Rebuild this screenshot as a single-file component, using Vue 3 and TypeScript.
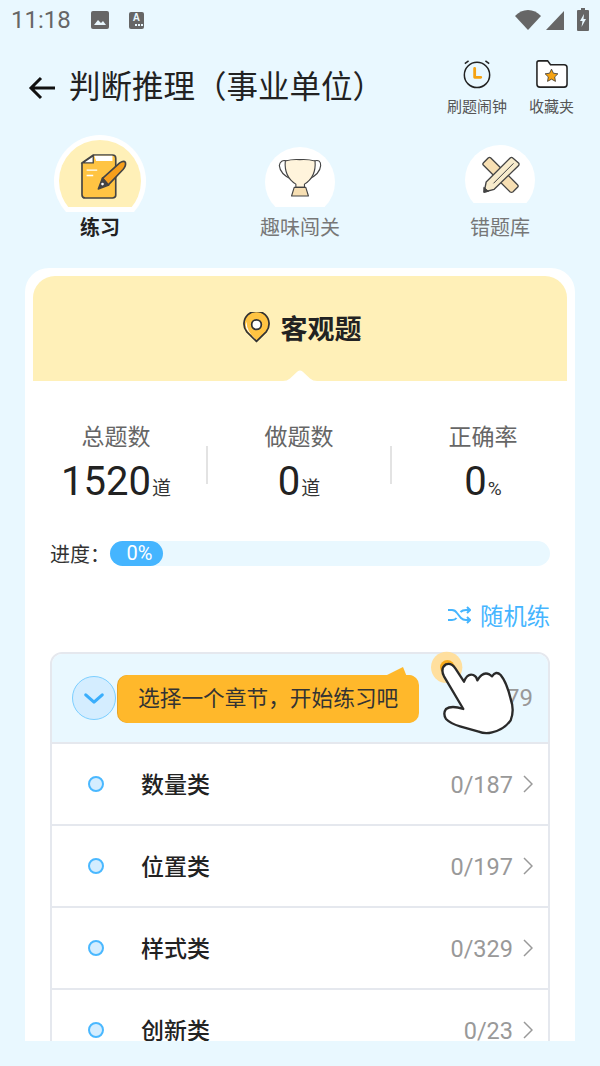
<script setup lang="ts">
interface Row { name: string; count: string }
const rows: Row[] = [
  { name: '数量类', count: '0/187' },
  { name: '位置类', count: '0/197' },
  { name: '样式类', count: '0/329' },
  { name: '创新类', count: '0/23' },
]
const stats = [
  { label: '总题数', value: '1520', unit: '道' },
  { label: '做题数', value: '0', unit: '道' },
  { label: '正确率', value: '0', unit: '%' },
]
</script>

<template>
  <div class="page">
    <div class="status">
      <span class="time">11:18</span>
      <svg class="st-img" viewBox="0 0 18 18"><path fill="#666" d="M2 0h14a2 2 0 0 1 2 2v14a2 2 0 0 1-2 2H2a2 2 0 0 1-2-2V2a2 2 0 0 1 2-2z"/><path fill="#e9f8ff" d="M3 14l4-5 3 3 2-2 3 4z"/></svg>
      <span class="st-a"><b>A</b><svg viewBox="0 0 15 3" width="15" height="3"><path fill="#e9f8ff" d="M6 0h2v2H6zM9 0h2v2H9zM12 0h2v2h-2z"/></svg></span>
      <span class="grow"></span>
      <svg class="st-wifi" viewBox="0 0 26 20"><path fill="#666" d="M13 20L0 6Q5.500 0 13 0t13 6z"/></svg>
      <svg class="st-sig" viewBox="0 0 18 19"><path fill="#666" d="M18 0v19H0z"/></svg>
      <svg class="st-bat" viewBox="0 0 12 23"><path fill="#666" d="M4 0h4v2h3a1 1 0 0 1 1 1v19a1 1 0 0 1-1 1H1a1 1 0 0 1-1-1V3a1 1 0 0 1 1-1h3z"/><path fill="#e9f8ff" d="M7 6L3 13h2.500L4.500 19 9 11H6.500z"/></svg>
    </div>

    <header class="topbar">
      <svg class="back" viewBox="0 0 28 24"><path d="M27 12H3M13 2L3 12l10 10" fill="none" stroke="#111" stroke-width="3"/></svg>
      <h1 class="title">判断推理（事业单位）</h1>
      <span class="grow"></span>
      <div class="tool alarm">
        <svg viewBox="0 0 32 32" width="30" height="30">
          <circle cx="16" cy="17" r="13.500" fill="none" stroke="#222" stroke-width="1.600"/>
          <path d="M3 5l4-3M29 5l-4-3" stroke="#222" stroke-width="1.600" fill="none"/>
          <path d="M13.500 10v9.500H20" fill="none" stroke="#f5a211" stroke-width="3" stroke-linejoin="round" stroke-linecap="round"/>
        </svg>
        <span>刷题闹钟</span>
      </div>
      <div class="tool folder">
        <svg viewBox="0 0 34 30" width="33" height="30">
          <path d="M2 3.500Q2 1.500 4 1.500h9l3 4h14q3 0 3 3v17q0 3-3 3H5q-3 0-3-3z" fill="#fff" stroke="#222" stroke-width="1.600"/>
          <path d="M17 10l2 4.200 4.600.6-3.300 3.200.8 4.600-4.100-2.300-4.100 2.300.8-4.600-3.300-3.200 4.600-.6z" fill="#f5a211" stroke="#333" stroke-width=".8"/>
        </svg>
        <span>收藏夹</span>
      </div>
    </header>

    <nav class="tabs">
      <div class="tab active">
        <div class="bubble b1">
          <div class="yellow"></div>
          <svg class="ic" viewBox="150 68 145 142" width="48" height="47">
            <path d="M190 74H248Q258 74 258 84V196Q258 204 248 204H166Q156 204 156 194V98Z" fill="#ffc443" stroke="#444" stroke-width="5"/>
            <path d="M190 76V98H158Z" fill="#fff" stroke="#444" stroke-width="4"/>
            <path d="M196 78H246V90H200ZM170 120H202M170 136H190" fill="#fff" stroke="#fff" stroke-width="4"/>
            <path d="M218 145L270 98Q282 90 287 96Q290 106 280 118L235 165Z" fill="#f79f1c" stroke="#444" stroke-width="5" stroke-linejoin="round"/>
            <path d="M218 143L237 165L205 177Z" fill="#444" stroke="#444" stroke-width="4" stroke-linejoin="round"/>
            <circle cx="218" cy="162" r="4" fill="#fff"/>
          </svg>
        </div>
        <span class="label">练习</span>
      </div>
      <div class="tab">
        <div class="bubble b2">
          <svg class="ic" viewBox="110 80 145 130" width="48" height="43">
            <path d="M145 92Q122 86 120 106Q122 132 158 148M225 92Q246 86 245 106Q243 132 207 148" fill="none" stroke="#444" stroke-width="3.400"/>
            <path d="M138 92Q160 86 182 88Q205 86 228 92Q232 140 196 162V172H170V162Q134 140 138 92Z" fill="#fff4dc" stroke="#444" stroke-width="3.400" stroke-linejoin="round"/>
            <path d="M165 172H200L208 198H157Z" fill="#f7dfb3" stroke="#444" stroke-width="3.400" stroke-linejoin="round"/>
          </svg>
        </div>
        <span class="label">趣味闯关</span>
      </div>
      <div class="tab">
        <div class="bubble b3">
          <svg class="ic" viewBox="720 75 125 120" width="42" height="40">
            <path d="M752 84L832 164Q836 168 832 172L818 186Q814 188 810 186L730 106Q726 102 730 98L744 84Q748 80 752 84Z" fill="#f7dfb3" stroke="#444" stroke-width="4"/>
            <path d="M818 84L836 100Q838 104 834 108L762 178L732 186L738 156L810 84Q814 80 818 84Z" fill="#f7ebcc" stroke="#444" stroke-width="4" stroke-linejoin="round"/>
            <path d="M731 172L745 184L731 187Z" fill="#444" stroke="#444" stroke-width="3"/>
            <path d="M760 160L820 100" stroke="#444" stroke-width="3"/>
          </svg>
        </div>
        <span class="label">错题库</span>
      </div>
    </nav>

    <main class="card">
      <section class="banner">
        <svg viewBox="0 0 28 32" width="27" height="31">
          <path d="M14 30.500L4 20.500A13 13 0 1 1 24 20.500Z" fill="#ffc443" stroke="#333" stroke-width="1.800" stroke-linejoin="round"/>
          <path d="M14 29L6 21A11 11 0 0 1 3.500 10Q4 21 14 29Z" fill="#fff"/>
          <circle cx="14" cy="13" r="5" fill="#fff" stroke="#333" stroke-width="1.800"/>
        </svg>
        <span>客观题</span>
        <svg class="notch" viewBox="0 0 34 11" width="34" height="11"><path fill="#fff" d="M0 11Q4 11 7 8.500L14.500 1.500Q17 -.5 19.500 1.500L27 8.500Q30 11 34 11Z"/></svg>
      </section>

      <section class="stats">
        <div v-for="s in stats" :key="s.label" class="stat">
          <span class="stat-label">{{ s.label }}</span>
          <span class="stat-value">{{ s.value }}<small>{{ s.unit }}</small></span>
        </div>
      </section>

      <section class="progress">
        <span class="p-label">进度：</span>
        <div class="track"><div class="fill" :style="{ width: '53px' }">0%</div></div>
      </section>

      <div class="random">
        <svg viewBox="0 0 24 20" width="24" height="20">
          <path d="M1 5H5Q8 5 10 8L14 13Q16 15 19 15H23M20 12l3 3-3 3M1 15H5Q8 15 9.500 13M13.500 7Q15.500 5 19 5H23M20 2l3 3-3 3" fill="none" stroke="#45b5ff" stroke-width="2"/>
        </svg>
        <span>随机练</span>
      </div>

      <section class="list">
        <div class="head">
          <div class="toggle">
            <svg viewBox="0 0 24 14" width="22" height="13"><path d="M3 3l9 8 9-8" fill="none" stroke="#3aaefc" stroke-width="3.400" stroke-linecap="round" stroke-linejoin="round"/></svg>
          </div>
          <span class="grow"></span>
          <span class="head-count">0/779</span>
          <div class="tip">
            <svg class="tip-ear" viewBox="0 0 24 10" width="24" height="10"><path fill="#ffb82b" d="M0 10L20 0L24 10Z"/></svg>
            选择一个章节，开始练习吧
          </div>
          <svg class="hand" viewBox="0 0 540 330" width="180" height="110">
            <circle cx="200" cy="85" r="47" fill="#ffdf9e"/>
            <circle cx="202" cy="85" r="22" fill="#f8ab1c"/>
            <path d="M250 210L192 112Q180 88 198 76Q214 70 226 88L252 128Q262 102 280 108Q290 112 292 124Q308 96 328 106L336 112Q348 94 362 108Q380 130 392 180Q404 214 392 244Q372 272 336 280Q316 286 296 278L240 262Q212 254 198 240Q188 224 198 210Q214 198 250 210Z" fill="#fff" stroke="#2a2a2a" stroke-width="7" stroke-linejoin="round"/>
          </svg>
        </div>
        <div v-for="r in rows" :key="r.name" class="row">
          <i class="dot"></i>
          <span class="name">{{ r.name }}</span>
          <span class="grow"></span>
          <span class="count">{{ r.count }}</span>
          <svg class="chev" viewBox="0 0 10 18" width="10" height="18"><path d="M1 1l8 8-8 8" fill="none" stroke="#999" stroke-width="1.500"/></svg>
        </div>
      </section>
    </main>
  </div>
</template>

<style>
html, body { margin: 0; background: #e9f8ff; }
</style>

<style scoped>
.page {
  width: 600px; height: 1066px; overflow: hidden; background: #e9f8ff;
  font-family: Roboto, "Noto Sans CJK SC", sans-serif; color: #222;
  display: flex; flex-direction: column;
}
.grow { flex: 1; }
.status { height: 40px; display: flex; align-items: center; padding: 0 11px; box-sizing: border-box; }
.time { font-size: 24px; color: #666; line-height: 42px; }
.st-img { width: 18px; height: 18px; margin-left: 20px; }
.st-a {
  width: 15px; height: 17px; margin-left: 20px; background: #666; border-radius: 2px; color: #e9f8ff;
  display: flex; flex-direction: column; align-items: center; font-size: 10px; line-height: 12px;
}
.st-a b { font-family: "Liberation Sans", sans-serif; }
.st-a svg { display: block; }
.st-wifi { width: 26px; height: 20px; }
.st-sig { width: 18px; height: 19px; margin-left: 5px; margin-top: 1px; }
.st-bat { width: 12px; height: 23px; margin-left: 13px; margin-top: -2px; }

.topbar { height: 90px; display: flex; align-items: center; padding: 0 26px 0 28px; box-sizing: border-box; }
.back { width: 28px; height: 24px; margin-top: 5px; }
.title { margin: 5px 0 0 13px; font-size: 31.500px; font-weight: 400; color: #222; line-height: 40px; white-space: nowrap; }
.tool { display: flex; flex-direction: column; align-items: center; font-size: 15px; color: #555; white-space: nowrap; height: 58px; margin-top: 5px; }
.tool span { line-height: 20px; margin-top: auto; }
.alarm { margin-right: 22px; }
.tool svg { display: block; flex: none; }

.tabs { display: grid; grid-template-columns: repeat(3, 200px); height: 120px; margin-bottom: 18px; }
.tab { display: flex; flex-direction: column; align-items: center; height: 111px; }
.bubble { position: relative; overflow: hidden; flex: none; }
.bubble::before { content: ""; position: absolute; left: 0; top: 0; border-radius: 50%; background: #fff; }
.b1 { width: 92px; height: 77px; margin-top: 5px; }
.b1::before { width: 92px; height: 92px; }
.yellow { position: absolute; left: 5px; top: 5px; width: 82px; height: 82px; border-radius: 50%; background: #fff0b8; clip-path: inset(0 0 15px 0); }
.b2 { width: 70px; height: 60px; margin-top: 17px; }
.b3 { width: 70px; height: 58px; margin-top: 15px; }
.b2::before, .b3::before { width: 70px; height: 70px; }
.ic { position: absolute; }
.b1 .ic { left: 26px; top: 18px; }
.b2 .ic { left: 11px; top: 10px; }
.b3 .ic { left: 15px; top: 10px; }
.label { margin-top: auto; font-size: 20px; line-height: 26px; color: #777; }
.active .label { color: #222; font-weight: 700; }

.card {
  width: 550px; height: 773px; margin-left: 25px; background: #fff; border-radius: 24px 24px 0 0;
  overflow: hidden; flex: none; padding-top: 8px; box-sizing: border-box;
}
.banner {
  position: relative; margin: 0 8px; height: 105px; padding: 0 0 2px 4px; box-sizing: border-box; background: #fff0b8; border-radius: 22px 22px 0 0;
  display: flex; align-items: center; justify-content: center; gap: 11px;
  font-size: 27px; font-weight: 700; color: #222;
}
.notch { position: absolute; left: 250px; bottom: 0; }
.stats { display: grid; grid-template-columns: 182px 184px 184px; margin-top: 42px; }
.stat { display: flex; flex-direction: column; align-items: center; position: relative; }
.stat:not(:last-child)::after { content: ""; position: absolute; right: -1px; top: 23px; height: 38px; width: 2px; background: #e3e3e3; }
.stat-label { font-size: 23px; line-height: 30px; color: #666; }
.stat-value { font-size: 40px; line-height: 58px; color: #222; }
.stat-value small { font-size: 19px; color: #333; margin-left: 1px; }
.progress { display: flex; align-items: center; margin: 22px 25px 0; height: 26px; }
.p-label { font-size: 20px; color: #333; width: 60px; flex: none; white-space: nowrap; }
.track { flex: 1; height: 25px; border-radius: 13px; background: #e9f8ff; }
.fill { height: 25px; box-sizing: border-box; padding-left: 6px; border-radius: 13px; background: #45b5ff; color: #fff; font-size: 20px; line-height: 25px; text-align: center; }
.random { display: flex; align-items: center; justify-content: flex-end; gap: 9px; margin: 33px 25px 0; height: 32px; color: #45b5ff; font-size: 23.300px; }
.list { margin: 21px 25px 0; border: 2px solid #e5e8ee; border-radius: 12px 12px 0 0; box-sizing: border-box; }
.head {
  position: relative; height: 88px; background: #e9f8ff; border-radius: 10px 10px 0 0; border-bottom: 2px solid #e5e8ee;
  box-sizing: content-box; display: flex; align-items: center; padding: 0 15px 0 20px;
}
.toggle {
  width: 44px; height: 44px; box-sizing: border-box; border: 1.500px solid #7ccfff; border-radius: 50%; background: #d4edff;
  display: flex; align-items: center; justify-content: center;
}
.head-count { font-size: 24px; color: #999; }
.tip {
  position: absolute; left: 66px; top: 21px; width: 301px; height: 48px; box-sizing: border-box; padding-left: 20px;
  background: #ffb82b; border-radius: 10px; box-shadow: -1px 0 0 #e8a325; color: #333; font-size: 21.700px; line-height: 48px; white-space: nowrap;
}
.tip-ear { position: absolute; right: 12px; top: -8px; }
.hand { position: absolute; left: 328px; top: -15px; }
.row { height: 80px; display: flex; align-items: center; border-bottom: 2px solid #e5e8ee; padding: 0 15px 0 36px; }
.dot { width: 16px; height: 16px; box-sizing: border-box; border: 2px solid #4ab8ff; border-radius: 50%; background: #d4edff; flex: none; }
.name { margin-left: 37px; font-size: 23px; font-weight: 500; color: #222; line-height: 30px; margin-top: 4px; }
.count { font-size: 23.500px; color: #999; margin-top: 2px; }
.chev { margin-left: 10px; }
</style>
